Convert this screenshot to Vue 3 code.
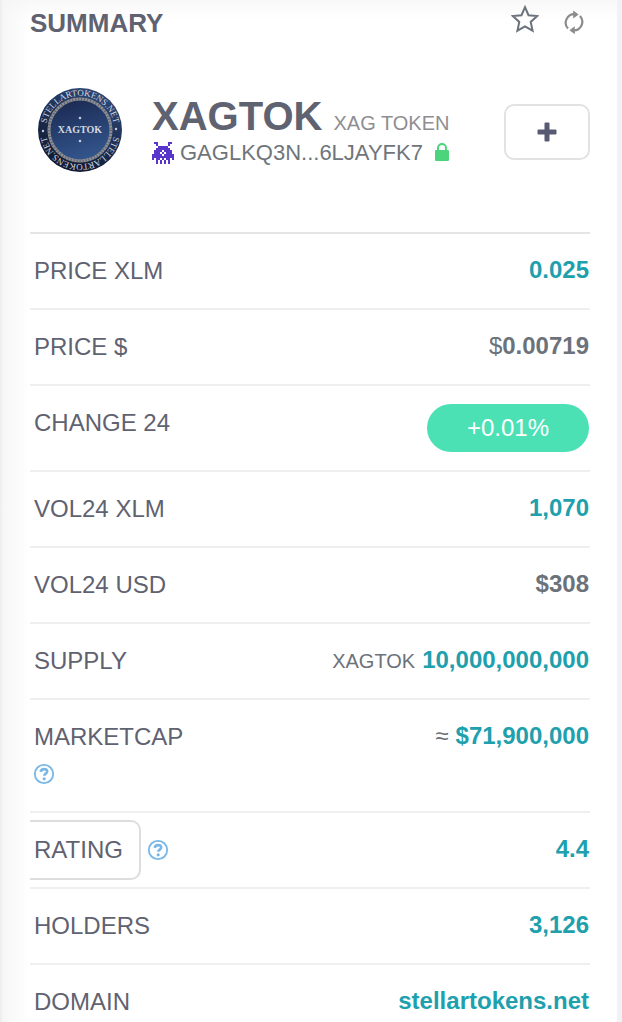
<template>
  <main class="card">
    <header class="card-head">
      <h2>SUMMARY</h2>
      <div class="tools">
        <button type="button" class="icon-btn" aria-label="Add to favourites">
          <svg width="28" height="28" viewBox="0 0 28 28">
            <path
              d="M14 2.200l3.500 8 8.700.8-6.500 5.900 1.900 8.800L14 21.400l-7.600 4.300 1.900-8.800L1.800 11l8.700-.8z"
              fill="none"
              stroke="#6c737c"
              stroke-width="2"
            />
          </svg>
        </button>
        <button type="button" class="icon-btn refresh" aria-label="Refresh">
          <svg width="20" height="24" viewBox="0 0 20 24">
            <g fill="none" stroke="#8c8c8c" stroke-width="2.200">
              <path d="M4 18.600A8.600 8.600 0 0 1 10.800 4.200" />
              <path d="M16 6A8.600 8.600 0 0 1 9.200 20.400" />
            </g>
            <path d="M9.200.4l5.400 4-5.400 4zM10.800 24.200l-5.400-4 5.400-4z" fill="#8c8c8c" />
          </svg>
        </button>
      </div>
    </header>

    <section class="token">
      <svg class="logo" width="86" height="86" viewBox="0 0 86 86">
        <defs>
          <linearGradient id="outer" x1="0.8" y1="0" x2="0.3" y2="1">
            <stop offset="0" stop-color="#2f4a78" />
            <stop offset="0.5" stop-color="#1d2f55" />
            <stop offset="1" stop-color="#10172a" />
          </linearGradient>
          <linearGradient id="inner" x1="0.3" y1="0" x2="0.6" y2="1">
            <stop offset="0" stop-color="#1b2a52" />
            <stop offset="1" stop-color="#34578f" />
          </linearGradient>
          <path id="ringTop" d="M8.800 43a34.200 34.200 0 0 1 68.400 0" />
          <path id="ringBottom" d="M77.200 43a34.200 34.200 0 0 1-68.400 0" />
        </defs>
        <circle cx="43" cy="43" r="42" fill="url(#outer)" />
        <circle cx="43" cy="43" r="31" fill="url(#inner)" stroke="#8d9096" stroke-width="3" />
        <circle
          cx="43"
          cy="43"
          r="31"
          fill="none"
          stroke="#5d626c"
          stroke-width="3"
          stroke-dasharray="1 2"
        />
        <g fill="#d3d8e2" font-family="'Liberation Serif', serif" text-anchor="middle">
          <text font-size="9">
            <textPath href="#ringTop" startOffset="50%">STELLARTOKENS.NET</textPath>
          </text>
          <text font-size="9">
            <textPath href="#ringBottom" startOffset="50%">STELLARTOKENS.NET</textPath>
          </text>
          <text x="43" y="46" font-size="10" font-weight="bold">XAGTOK</text>
        </g>
        <g fill="#c3ccdc">
          <circle cx="43" cy="31" r="1.300" />
          <circle cx="43" cy="54" r="1.300" />
          <circle cx="6" cy="44" r="1.200" />
          <circle cx="79" cy="42" r="1.200" />
        </g>
      </svg>

      <div class="info">
        <h1>XAGTOK <small>XAG TOKEN</small></h1>
        <p class="address">
          <svg width="22" height="22" viewBox="0 0 11 11" shape-rendering="crispEdges">
            <template v-for="(line, y) in invader" :key="y">
              <template v-for="(cell, x) in line.split('')" :key="x">
                <rect v-if="cell === '#'" :x="x" :y="y" width="1" height="1" fill="#5a35cc" />
              </template>
            </template>
          </svg>
          <a href="#">GAGLKQ3N...6LJAYFK7</a>
          <svg class="lock" width="14" height="18" viewBox="0 0 14 18">
            <path d="M3 9V5a4 4 0 0 1 8 0v4" fill="none" stroke="#4bd47c" stroke-width="2" />
            <rect y="7" width="14" height="11" rx="1" fill="#4bd47c" />
          </svg>
        </p>
      </div>

      <button type="button" class="add" aria-label="Add">
        <svg width="20" height="20" viewBox="0 0 20 20">
          <path
            d="M8.500 .5h3a1 1 0 0 1 1 1v6h6a1 1 0 0 1 1 1v3a1 1 0 0 1-1 1h-6v6a1 1 0 0 1-1 1h-3a1 1 0 0 1-1-1v-6h-6a1 1 0 0 1-1-1v-3a1 1 0 0 1 1-1h6v-6a1 1 0 0 1 1-1z"
            fill="#575a70"
          />
        </svg>
      </button>
    </section>

    <table>
      <tbody>
        <tr v-for="row in rows" :key="row.label">
          <th scope="row">
            <div class="label" :class="{ stacked: row.stacked }">
              <button v-if="row.boxed" type="button" class="boxed">{{ row.label }}</button>
              <span v-else>{{ row.label }}</span>
              <a v-if="row.help" href="#" class="help" :aria-label="'About ' + row.label">
                <svg width="22" height="22" viewBox="0 0 22 22">
                  <g fill="none" stroke="#78b7e6">
                    <circle cx="11" cy="11" r="9.200" stroke-width="1.800" />
                    <path
                      d="M7.800 8.800C8 6.900 9.400 6.100 11 6.100c1.800 0 3.200 1 3.200 2.500 0 2-2.900 2.100-2.900 4.200"
                      stroke-width="2.600"
                    />
                  </g>
                  <circle cx="11.200" cy="15.800" r="1.600" fill="#78b7e6" />
                </svg>
              </a>
            </div>
          </th>
          <td>
            <span v-if="row.badge" class="badge">{{ row.value }}</span>
            <div v-else class="amount">
              <span v-if="row.prefix" :class="row.prefixClass">{{ row.prefix }}</span>
              <a v-if="row.link" href="#">{{ row.value }}</a>
              <b v-else :class="row.tone">{{ row.value }}</b>
            </div>
          </td>
        </tr>
      </tbody>
    </table>
  </main>
</template>

<script setup>
const rows = [
  { label: 'PRICE XLM', value: '0.025', tone: 'teal' },
  { label: 'PRICE $', value: '0.00719', prefix: '$' },
  { label: 'CHANGE 24', value: '+0.01%', badge: true },
  { label: 'VOL24 XLM', value: '1,070', tone: 'teal' },
  { label: 'VOL24 USD', value: '$308' },
  { label: 'SUPPLY', value: '10,000,000,000', tone: 'teal', prefix: 'XAGTOK', prefixClass: 'code' },
  {
    label: 'MARKETCAP',
    value: '$71,900,000',
    tone: 'teal',
    prefix: '≈',
    prefixClass: 'approx',
    help: true,
    stacked: true
  },
  { label: 'RATING', value: '4.4', tone: 'teal', help: true, boxed: true },
  { label: 'HOLDERS', value: '3,126', link: true },
  { label: 'DOMAIN', value: 'stellartokens.net', link: true }
]

const invader = [
  '.##.....##.',
  '..#.....#..',
  '...#####...',
  '..#######..',
  '.####.####.',
  '.###.#.###.',
  '#####.#####',
  '###########',
  '#.##.#.##.#',
  '..#.#.#.#..',
  '..#.#.#.#..'
]
</script>

<style>
body {
  margin: 0;
  background: #f1f2f8;
}
</style>

<style scoped>
.card {
  box-sizing: border-box;
  min-height: 100vh;
  margin-right: 5px;
  padding: 4px 27px 0 30px;
  background:
    linear-gradient(to right, #ececec, rgba(246, 246, 246, 0.9) 3px, rgba(255, 255, 255, 0) 30px),
    linear-gradient(#f8f8f8, #fff 20px);
  color: #5f6270;
  font-family: 'Liberation Sans', Arial, sans-serif;
  font-size: 24px;
}
button {
  font: inherit;
  color: inherit;
  cursor: pointer;
}
svg {
  display: block;
  flex: none;
}
a {
  color: inherit;
  text-decoration: none;
}
.card-head {
  display: flex;
  justify-content: space-between;
  align-items: flex-start;
  height: 38px;
  padding-right: 6px;
}
h2 {
  margin: 0;
  font-size: 26px;
  line-height: 38px;
}
.tools {
  display: flex;
  gap: 25px;
}
.icon-btn {
  padding: 0;
  border: 0;
  background: none;
}
.refresh {
  padding-top: 6px;
}
.token {
  display: flex;
  align-items: center;
  height: 176px;
  padding: 0 0 14px 7px;
}
.info {
  flex: 1;
  min-width: 0;
  margin-left: 29px;
}
h1 {
  margin: 0;
  font-size: 40px;
  line-height: 38px;
  white-space: nowrap;
}
h1 small {
  color: #8e8e92;
  font-size: 20px;
  font-weight: normal;
}
.address {
  display: flex;
  align-items: center;
  margin: 0;
  color: #6f757b;
  font-size: 22px;
  line-height: 22px;
}
.address .lock {
  margin-bottom: 2px;
}
.address a {
  margin: 0 12px 0 6px;
}
.add {
  display: flex;
  align-items: center;
  justify-content: center;
  width: 86px;
  height: 56px;
  margin-top: 4px;
  padding: 0;
  border: 2px solid #e2e2e4;
  border-radius: 10px;
  background: #fff;
}
table {
  width: 100%;
  border-collapse: separate;
  border-spacing: 0;
}
th,
td {
  padding: 18px 1px 18px 4px;
  border-top: 2px solid #eeeff0;
  line-height: 38px;
  vertical-align: top;
}
tr:first-child th,
tr:first-child td {
  border-top-color: #e4e5e6;
}
th {
  font-weight: normal;
  text-align: left;
}
td {
  color: #6c727a;
  text-align: right;
  white-space: nowrap;
}
.label {
  display: flex;
  align-items: center;
  height: 38px;
  gap: 7px;
}
.stacked {
  flex-direction: column;
  align-items: flex-start;
  height: auto;
}
.stacked .help {
  margin-bottom: 8px;
}
.boxed {
  height: 60px;
  margin: 0 0 0 -4px;
  padding: 0 16px 0 4px;
  border: 2px solid #dcdddf;
  border-left: 0;
  border-radius: 0 10px 10px 0;
  background: none;
}
.help {
  margin-left: -1px;
}
.amount {
  display: flex;
  justify-content: flex-end;
  align-items: baseline;
  height: 38px;
  line-height: 36px;
}
td a,
.teal {
  color: #209fad;
  font-weight: bold;
}
.code {
  margin-right: 7px;
  font-size: 20px;
}
.approx {
  margin-right: 7px;
}
.badge {
  display: block;
  width: 162px;
  margin-left: auto;
  border-radius: 24px;
  background: #4be1b5;
  color: #fff;
  line-height: 48px;
  text-align: center;
}
</style>
